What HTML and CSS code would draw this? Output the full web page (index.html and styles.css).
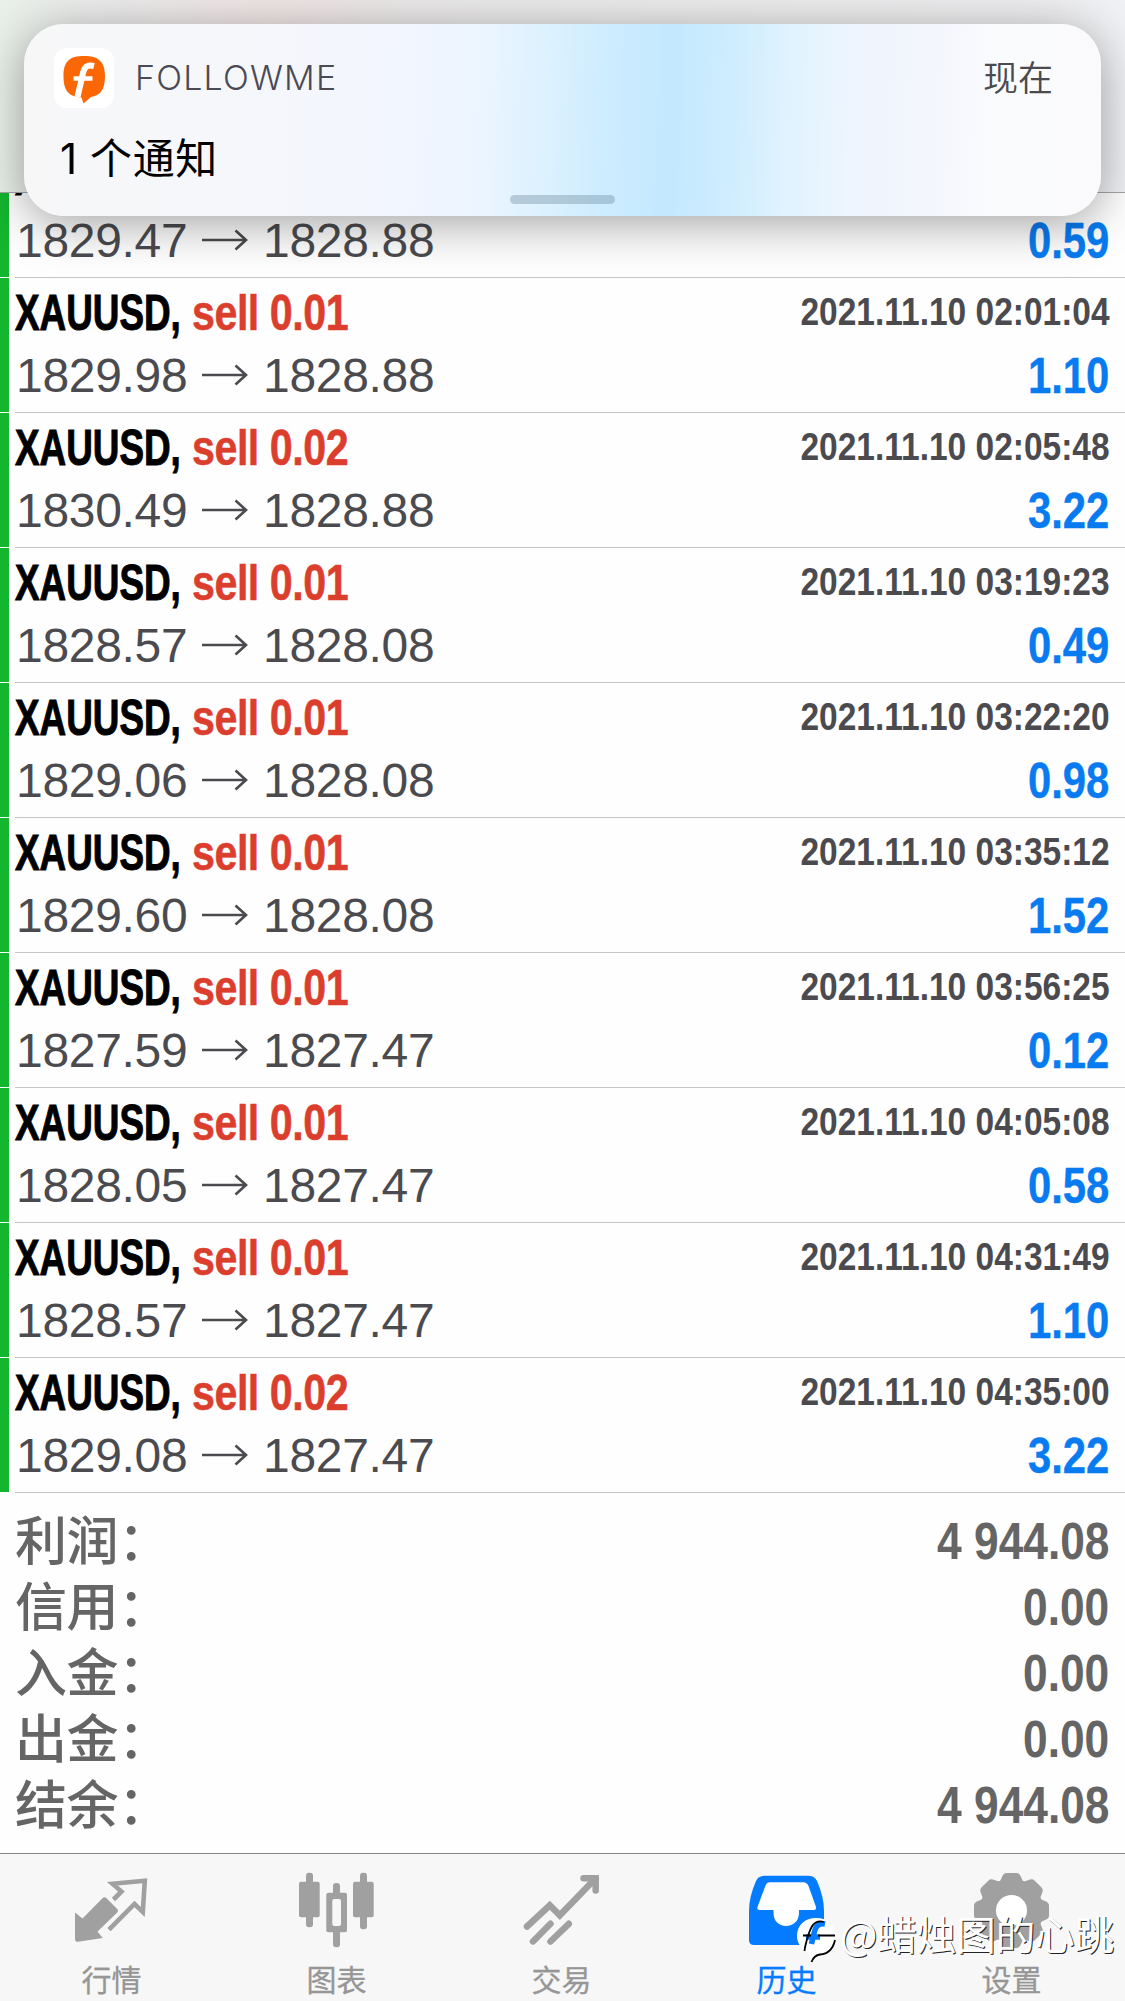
FILE: index.html
```html
<!DOCTYPE html>
<html lang="zh-CN">
<head>
<meta charset="utf-8">
<title>历史</title>
<link rel="stylesheet" href="styles.css">
</head>
<body>
<svg class="defs" width="0" height="0">
  <symbol id="arrow" viewBox="0 0 46 24"><path d="M0 12H44M33.500 2.500L44 12L33.500 21.500" fill="none" stroke="#4b4b4f" stroke-width="2.600"/></symbol>
</svg>
<div class="screen">
  <header class="nav"></header>

  <main class="deals">
    <div class="deal deal-first"><i class="bar"></i><div class="info">
      <div class="line top"><span class="symbol">XAUUSD,</span></div>
      <div class="line bottom"><span class="price">1829.47</span><svg class="arrow"><use href="#arrow"/></svg><span class="price">1828.88</span><span class="profit">0.59</span></div>
    </div></div>
    <div class="deal"><i class="bar"></i><div class="info">
      <div class="line top"><span class="symbol">XAUUSD,</span><span class="side">sell 0.01</span><span class="date">2021.11.10 02:01:04</span></div>
      <div class="line bottom"><span class="price">1829.98</span><svg class="arrow"><use href="#arrow"/></svg><span class="price">1828.88</span><span class="profit">1.10</span></div>
    </div></div>
    <div class="deal"><i class="bar"></i><div class="info">
      <div class="line top"><span class="symbol">XAUUSD,</span><span class="side">sell 0.02</span><span class="date">2021.11.10 02:05:48</span></div>
      <div class="line bottom"><span class="price">1830.49</span><svg class="arrow"><use href="#arrow"/></svg><span class="price">1828.88</span><span class="profit">3.22</span></div>
    </div></div>
    <div class="deal"><i class="bar"></i><div class="info">
      <div class="line top"><span class="symbol">XAUUSD,</span><span class="side">sell 0.01</span><span class="date">2021.11.10 03:19:23</span></div>
      <div class="line bottom"><span class="price">1828.57</span><svg class="arrow"><use href="#arrow"/></svg><span class="price">1828.08</span><span class="profit">0.49</span></div>
    </div></div>
    <div class="deal"><i class="bar"></i><div class="info">
      <div class="line top"><span class="symbol">XAUUSD,</span><span class="side">sell 0.01</span><span class="date">2021.11.10 03:22:20</span></div>
      <div class="line bottom"><span class="price">1829.06</span><svg class="arrow"><use href="#arrow"/></svg><span class="price">1828.08</span><span class="profit">0.98</span></div>
    </div></div>
    <div class="deal"><i class="bar"></i><div class="info">
      <div class="line top"><span class="symbol">XAUUSD,</span><span class="side">sell 0.01</span><span class="date">2021.11.10 03:35:12</span></div>
      <div class="line bottom"><span class="price">1829.60</span><svg class="arrow"><use href="#arrow"/></svg><span class="price">1828.08</span><span class="profit">1.52</span></div>
    </div></div>
    <div class="deal"><i class="bar"></i><div class="info">
      <div class="line top"><span class="symbol">XAUUSD,</span><span class="side">sell 0.01</span><span class="date">2021.11.10 03:56:25</span></div>
      <div class="line bottom"><span class="price">1827.59</span><svg class="arrow"><use href="#arrow"/></svg><span class="price">1827.47</span><span class="profit">0.12</span></div>
    </div></div>
    <div class="deal"><i class="bar"></i><div class="info">
      <div class="line top"><span class="symbol">XAUUSD,</span><span class="side">sell 0.01</span><span class="date">2021.11.10 04:05:08</span></div>
      <div class="line bottom"><span class="price">1828.05</span><svg class="arrow"><use href="#arrow"/></svg><span class="price">1827.47</span><span class="profit">0.58</span></div>
    </div></div>
    <div class="deal"><i class="bar"></i><div class="info">
      <div class="line top"><span class="symbol">XAUUSD,</span><span class="side">sell 0.01</span><span class="date">2021.11.10 04:31:49</span></div>
      <div class="line bottom"><span class="price">1828.57</span><svg class="arrow"><use href="#arrow"/></svg><span class="price">1827.47</span><span class="profit">1.10</span></div>
    </div></div>
    <div class="deal"><i class="bar"></i><div class="info">
      <div class="line top"><span class="symbol">XAUUSD,</span><span class="side">sell 0.02</span><span class="date">2021.11.10 04:35:00</span></div>
      <div class="line bottom"><span class="price">1829.08</span><svg class="arrow"><use href="#arrow"/></svg><span class="price">1827.47</span><span class="profit">3.22</span></div>
    </div></div>
  </main>

  <section class="totals">
    <div class="total"><span class="label">利润：</span><span class="amount">4 944.08</span></div>
    <div class="total"><span class="label">信用：</span><span class="amount">0.00</span></div>
    <div class="total"><span class="label">入金：</span><span class="amount">0.00</span></div>
    <div class="total"><span class="label">出金：</span><span class="amount">0.00</span></div>
    <div class="total"><span class="label">结余：</span><span class="amount">4 944.08</span></div>
  </section>

  <nav class="tabs">
    <a class="tab">
      <svg class="icon" viewBox="0 1854 225 100">
        <path d="M75 1912.500L82.500 1918.500L102.500 1898.200Q104.500 1896.200 106.500 1898.200L117 1908.700Q119 1910.700 117 1912.700L97.500 1931.500L102.700 1938L78 1941.800Q75 1942 75 1939Z" fill="#a0a0a0"/>
        <path d="M113.500 1899.500L121.500 1891.500L112.500 1883.700L144.800 1880.800L142.800 1912L134.500 1904L109 1929.700" fill="none" stroke="#a0a0a0" stroke-width="4.600"/>
      </svg>
      <span class="name">行情</span>
    </a>
    <a class="tab">
      <svg class="icon" viewBox="225 1854 225 100">
        <g fill="#a0a0a0">
          <rect x="299" y="1881.700" width="20.700" height="35.600" rx="2"/><rect x="306" y="1872.700" width="7" height="54.600" rx="3"/>
          <rect x="353" y="1881.700" width="20.700" height="35.600" rx="2"/><rect x="360" y="1872.700" width="7" height="56.500" rx="3"/>
          <rect x="326.300" y="1892.700" width="20.700" height="39.500" rx="2"/><rect x="333" y="1883" width="7" height="64.300" rx="3"/>
        </g>
        <rect x="332.300" y="1899" width="8.700" height="27" rx="2" fill="#f7f7f7"/>
      </svg>
      <span class="name">图表</span>
    </a>
    <a class="tab">
      <svg class="icon" viewBox="450 1854 225 100">
        <g fill="none" stroke="#a0a0a0" stroke-width="6.500" stroke-linecap="round">
          <path d="M527 1926.500L549.800 1905.300L559.800 1915.300L595.500 1878.500"/><path d="M583.500 1878.300H595.700V1890.500"/>
          <path d="M533 1941.500L550.500 1923.800M550.500 1941.500L568.800 1923.800"/>
        </g>
      </svg>
      <span class="name">交易</span>
    </a>
    <a class="tab active">
      <svg class="icon" viewBox="675 1854 225 100">
        <path d="M749 1940V1911Q749 1897 756 1881Q758.500 1875.700 765 1875.700H808Q814.500 1875.700 817 1881Q824 1897 824 1911V1945H754Q749 1945 749 1940Z" fill="#057bff"/>
        <path d="M770 1882.300H803Q807 1882.300 808.500 1886L816 1907Q816.500 1910 814 1910H799V1913C799 1921 793 1926 786 1926C779 1926 773.500 1921 773.500 1913V1910H760Q756.500 1910 757.500 1907L765.500 1885.500Q767 1882.300 770 1882.300Z" fill="#fff"/>
      </svg>
      <span class="name">历史</span>
    </a>
    <a class="tab">
      <svg class="icon" viewBox="900 1854 225 100">
        <g fill="#a0a0a0" transform="translate(1011.500 1910.500)">
          <circle r="31.500"/>
          <path id="tooth" d="M-13 -28Q-10.500 -30 -9.500 -33.500Q-8 -37.500 -5 -37.500H5Q8 -37.500 9.500 -33.500Q10.500 -30 13 -28L0 -16Z"/>
          <use href="#tooth" transform="rotate(45)"/><use href="#tooth" transform="rotate(90)"/><use href="#tooth" transform="rotate(135)"/><use href="#tooth" transform="rotate(180)"/><use href="#tooth" transform="rotate(225)"/><use href="#tooth" transform="rotate(270)"/><use href="#tooth" transform="rotate(315)"/>
          <circle r="15.500" fill="#fff"/>
        </g>
      </svg>
      <span class="name">设置</span>
    </a>
  </nav>

  <aside class="notice">
    <div class="notice-head">
      <svg class="app" viewBox="0 0 60 60">
        <rect width="60" height="60" rx="13" fill="#fff"/>
        <path d="M30 8C44 8 51 13 51 28C51 42 46 47.500 37 49L29.500 55.500L27.500 49.500C14 48.500 9.500 42 9.500 28C9.500 13 16 8 30 8Z" fill="#fb6705"/>
        <path d="M40 18C33.500 16.500 30.500 18.500 29 25L23.500 49" fill="none" stroke="#fff" stroke-width="6"/>
        <path d="M19.500 30.500H38.500" stroke="#fff" stroke-width="4.500"/>
      </svg>
      <span class="app-name">FOLLOWME</span>
      <span class="when">现在</span>
    </div>
    <div class="message">1 个通知</div>
    <i class="grip"></i>
  </aside>

  <div class="watermark">
    <svg class="mark" viewBox="796 1915 44 50">
      <path d="M816 1918C828 1918 835 1925 835 1935C835 1947 829 1952 818 1954C813 1955 811 1958 811 1962L808 1952C801 1949 797 1943 797 1936C797 1925 805 1918 816 1918Z" fill="#fff"/>
      <path d="M825 1924C815.500 1922 814.500 1930 811.500 1944M806 1937H820" fill="none" stroke="#057bff" stroke-width="5.500"/>
      <path d="M824 1922C813 1918.500 810 1930 808 1936C806.500 1941 805 1946 804.500 1951M803 1935.500H811M818 1935.500H835M835 1940C833 1949 828 1954 820 1954.500C816 1955 813 1958 811.500 1962" fill="none" stroke="#000" stroke-width="1.800"/>
    </svg>
    <span>@蜡烛图的心跳</span>
  </div>
</div>
</body>
</html>
```
FILE: styles.css
```css
* { box-sizing: border-box; }

body {
  margin: 0;
  background: #fefefe;
  font-family: "Liberation Sans", "Noto Sans CJK SC", sans-serif;
}

.defs { position: absolute; }

.screen {
  position: relative;
  display: flex;
  flex-direction: column;
  width: 1125px;
  height: 2001px;
  overflow: hidden;
}

.nav {
  flex: none;
  height: 193px;
  border-bottom: 1px solid #a5a5a8;
  background: linear-gradient(90deg, #e9efe9 0, #ececec 10%, #f1e6e6 24%, #ebe9e9 36%, #ececec 60%, #eeeef0 90%, #f0f1f4 100%);
}

.deals { flex: none; overflow: hidden; }

.deal { display: flex; height: 135px; }
.deal-first { margin-top: -50px; }

.bar { flex: none; width: 9px; height: 134px; background: #15b62f; }

.info {
  flex: 1;
  margin-left: 6px;
  padding-right: 15px;
  border-bottom: 1px solid #c4c4c8;
}

.line { display: flex; white-space: nowrap; }
.top { height: 68px; font-weight: bold; font-size: 50px; line-height: 68px; }
.bottom { height: 60px; align-items: center; font-size: 48px; line-height: 60px; }

/* Condensed faces are made by squeezing the bold one. */
.symbol {
  width: 177px;
  color: #000;
  -webkit-text-stroke: 1px #000;
  transform: translateY(1px) scaleX(.737);
  transform-origin: 0 50%;
}
.side {
  color: #dc3e2e;
  letter-spacing: -.6px;
  -webkit-text-stroke: .5px #dc3e2e;
  transform: translateY(1px) scaleX(.825);
  transform-origin: 0 50%;
}
.date {
  margin-left: auto;
  color: #4b4b4f;
  font-size: 39.5px;
  line-height: 67px;
  transform: scaleX(.848);
  transform-origin: 100% 50%;
}
.price { width: 172px; margin-left: 1px; color: #4b4b4f; letter-spacing: -.3px; }
.arrow { flex: none; width: 46px; height: 24px; margin: -2px 14px 0 14px; }
.profit {
  margin-left: auto;
  color: #087bf0;
  font-weight: bold;
  font-size: 49.500px;
  -webkit-text-stroke: .4px #087bf0;
  transform: translateX(-1px) scaleX(.845);
  transform-origin: 100% 50%;
}

.totals { flex: 1; padding: 11.500px 15px 0 15px; color: #656565; }
.total { display: flex; justify-content: space-between; height: 66.100px; }
.label { font: 500 52px/66px "Noto Sans CJK SC", sans-serif; letter-spacing: -.4px; }
.amount {
  padding-top: 7px;
  font-weight: bold;
  font-size: 51.500px;
  line-height: 58px;
  transform: translateX(-1px) scaleX(.86);
  transform-origin: 100% 50%;
}

.tabs {
  flex: none;
  display: flex;
  height: 148px;
  border-top: 1px solid #858588;
  background: #f7f7f7;
}
.tab { display: flex; flex-direction: column; flex: 1; align-items: center; color: #969696; }
.icon { width: 225px; height: 100px; }
.name { margin: 1px 2px 0 0; font: 400 30px/46px "Noto Sans CJK SC", sans-serif; -webkit-text-stroke: .3px; }
.active .name { color: #057bff; }

.notice {
  position: absolute;
  top: 24px;
  left: 24px;
  width: 1077px;
  height: 192px;
  padding: 24px 48px 0 30px;
  border-radius: 40px;
  background: linear-gradient(92deg, #f7f7f8 0, #f6f7fa 18%, #f3f6ff 34%, #ecf5ff 42%, #dbf1fe 49%, #cdecff 54%, #c3e9ff 60%, #d0edfe 66%, #e1f3fe 71%, #eef5fe 77%, #f4f6fd 84%, #fafbfd 90%, #fafafc 100%);
  box-shadow: 0 8px 48px rgba(0, 0, 0, .36);
}
.notice-head { display: flex; align-items: center; height: 60px; }
.app { width: 60px; height: 60px; }
.app-name { margin-left: 21px; color: #4a4a54; font: 350 34px/60px Inter, sans-serif; letter-spacing: 1.200px; }
.when { margin: -4px 0 0 auto; color: #4a4a4f; font: 350 35px/60px "Noto Sans CJK SC", sans-serif; }
.message {
  margin: 21px 0 0 6px;
  color: #000;
  font: 400 42px/60px Inter, "Noto Sans CJK SC", sans-serif;
  letter-spacing: .6px;
}
.grip {
  position: absolute;
  left: 486px;
  top: 171px;
  width: 105px;
  height: 9px;
  border-radius: 5px;
  background: rgba(90, 120, 140, .33);
}

.watermark {
  position: absolute;
  left: 796px;
  top: 1910px;
  display: flex;
  color: #fff;
  font: 400 39.500px/46px "Noto Sans CJK SC", sans-serif;
  text-shadow: 1px 1px 0 #222;
  white-space: nowrap;
}
.mark { width: 44px; height: 50px; margin-top: 5px; }
```
